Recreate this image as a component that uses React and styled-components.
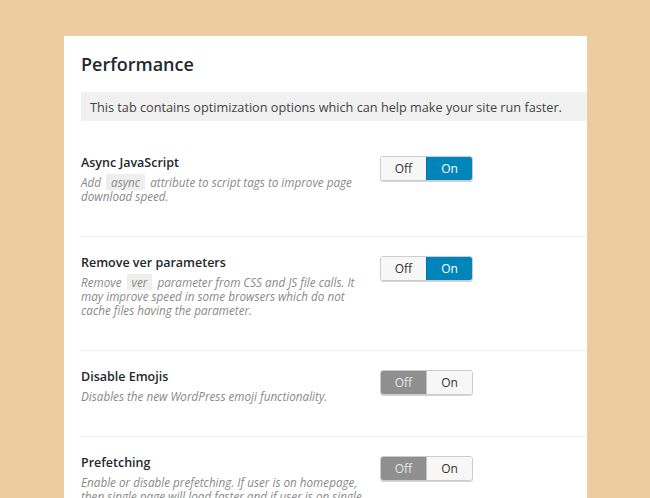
import React from "react";
import styled, { createGlobalStyle } from "styled-components";

const GlobalStyle = createGlobalStyle`
  html, body {
    margin: 0;
    padding: 0;
    background: #eecca2;
    overflow: hidden;
  }
  body {
    font-family: "Open Sans", "Liberation Sans", sans-serif;
  }
`;

const Page = styled.div`
  width: 650px;
  height: 498px;
  padding: 36px 0 0 64px;
  box-sizing: border-box;
  overflow: hidden;
`;

const Card = styled.div`
  width: 523px;
  min-height: 520px;
  background: #fff;
  padding: 16px 0 0 17px;
  box-sizing: border-box;
`;

const Title = styled.h1`
  margin: 0;
  font-size: 18px;
  line-height: 24px;
  font-weight: 600;
  color: #23282d;
`;

const Notice = styled.div`
  margin-top: 16px;
  height: 29px;
  display: flex;
  align-items: center;
  padding-left: 9px;
  background: #f1f1f1;
  font-size: 12.7px;
  color: #444;
  margin-bottom: 16px;
`;

const Row = styled.div`
  display: flex;
  align-items: flex-start;
  padding: 17px 0 33px;
  border-bottom: ${(p) => (p.$last ? "none" : "1px solid #eeeeee")};
`;

const Info = styled.div`
  width: 290px;
  margin-right: 9px;
`;

const Label = styled.div`
  font-size: 12.5px;
  line-height: 18px;
  font-weight: 600;
  color: #23282d;
`;

const Desc = styled.div`
  margin-top: 3px;
  font-size: 11.7px;
  line-height: 14px;
  font-style: italic;
  color: #8a8a8a;
`;

const Code = styled.span`
  background: #eeeeee;
  padding: 0 5px;
  margin: 0 2px;
  font-style: italic;
  color: #8a8a8a;
`;

const Toggle = styled.div`
  display: flex;
  margin-top: 2px;
  border: 1px solid #cccccc;
  border-radius: 3px;
  overflow: hidden;
  box-shadow: 0 1px 0 #d5d5d5;
`;

const Segment = styled.div`
  width: 45px;
  height: 23px;
  display: flex;
  align-items: center;
  justify-content: center;
  font-size: 12px;
  background: ${(p) =>
    p.$active ? (p.$kind === "on" ? "#0085ba" : "#8f8f8f") : "#f7f7f7"};
  color: ${(p) =>
    p.$active ? (p.$kind === "on" ? "#ffffff" : "#e6e6e6") : "#333333"};
  border-left: ${(p) =>
    p.$kind === "on"
      ? p.$active
        ? "1px solid #0073aa"
        : "1px solid #c4c4c4"
      : "none"};
`;

const options = [
  {
    title: "Async JavaScript",
    desc: (
      <>
        Add <Code>async</Code> attribute to script tags to improve page
        download speed.
      </>
    ),
    on: true,
  },
  {
    title: "Remove ver parameters",
    desc: (
      <>
        Remove <Code>ver</Code> parameter from CSS and JS file calls. It may
        improve speed in some browsers which do not cache files having the
        parameter.
      </>
    ),
    on: true,
  },
  {
    title: "Disable Emojis",
    desc: <>Disables the new WordPress emoji functionality.</>,
    on: false,
  },
  {
    title: "Prefetching",
    desc: (
      <>
        Enable or disable prefetching. If user is on homepage, then single page
        will load faster and if user is on single page, home page will load
        faster.
      </>
    ),
    on: false,
  },
];

const App = () => {
  return (
    <Page>
      <GlobalStyle />
      <Card>
        <Title>Performance</Title>
        <Notice>
          This tab contains optimization options which can help make your site
          run faster.
        </Notice>
        {options.map((opt, i) => (
          <Row key={opt.title} $last={i === options.length - 1}>
            <Info>
              <Label>{opt.title}</Label>
              <Desc>{opt.desc}</Desc>
            </Info>
            <Toggle>
              <Segment $active={!opt.on} $kind="off">
                Off
              </Segment>
              <Segment $active={opt.on} $kind="on">
                On
              </Segment>
            </Toggle>
          </Row>
        ))}
      </Card>
    </Page>
  );
};

export default App;
